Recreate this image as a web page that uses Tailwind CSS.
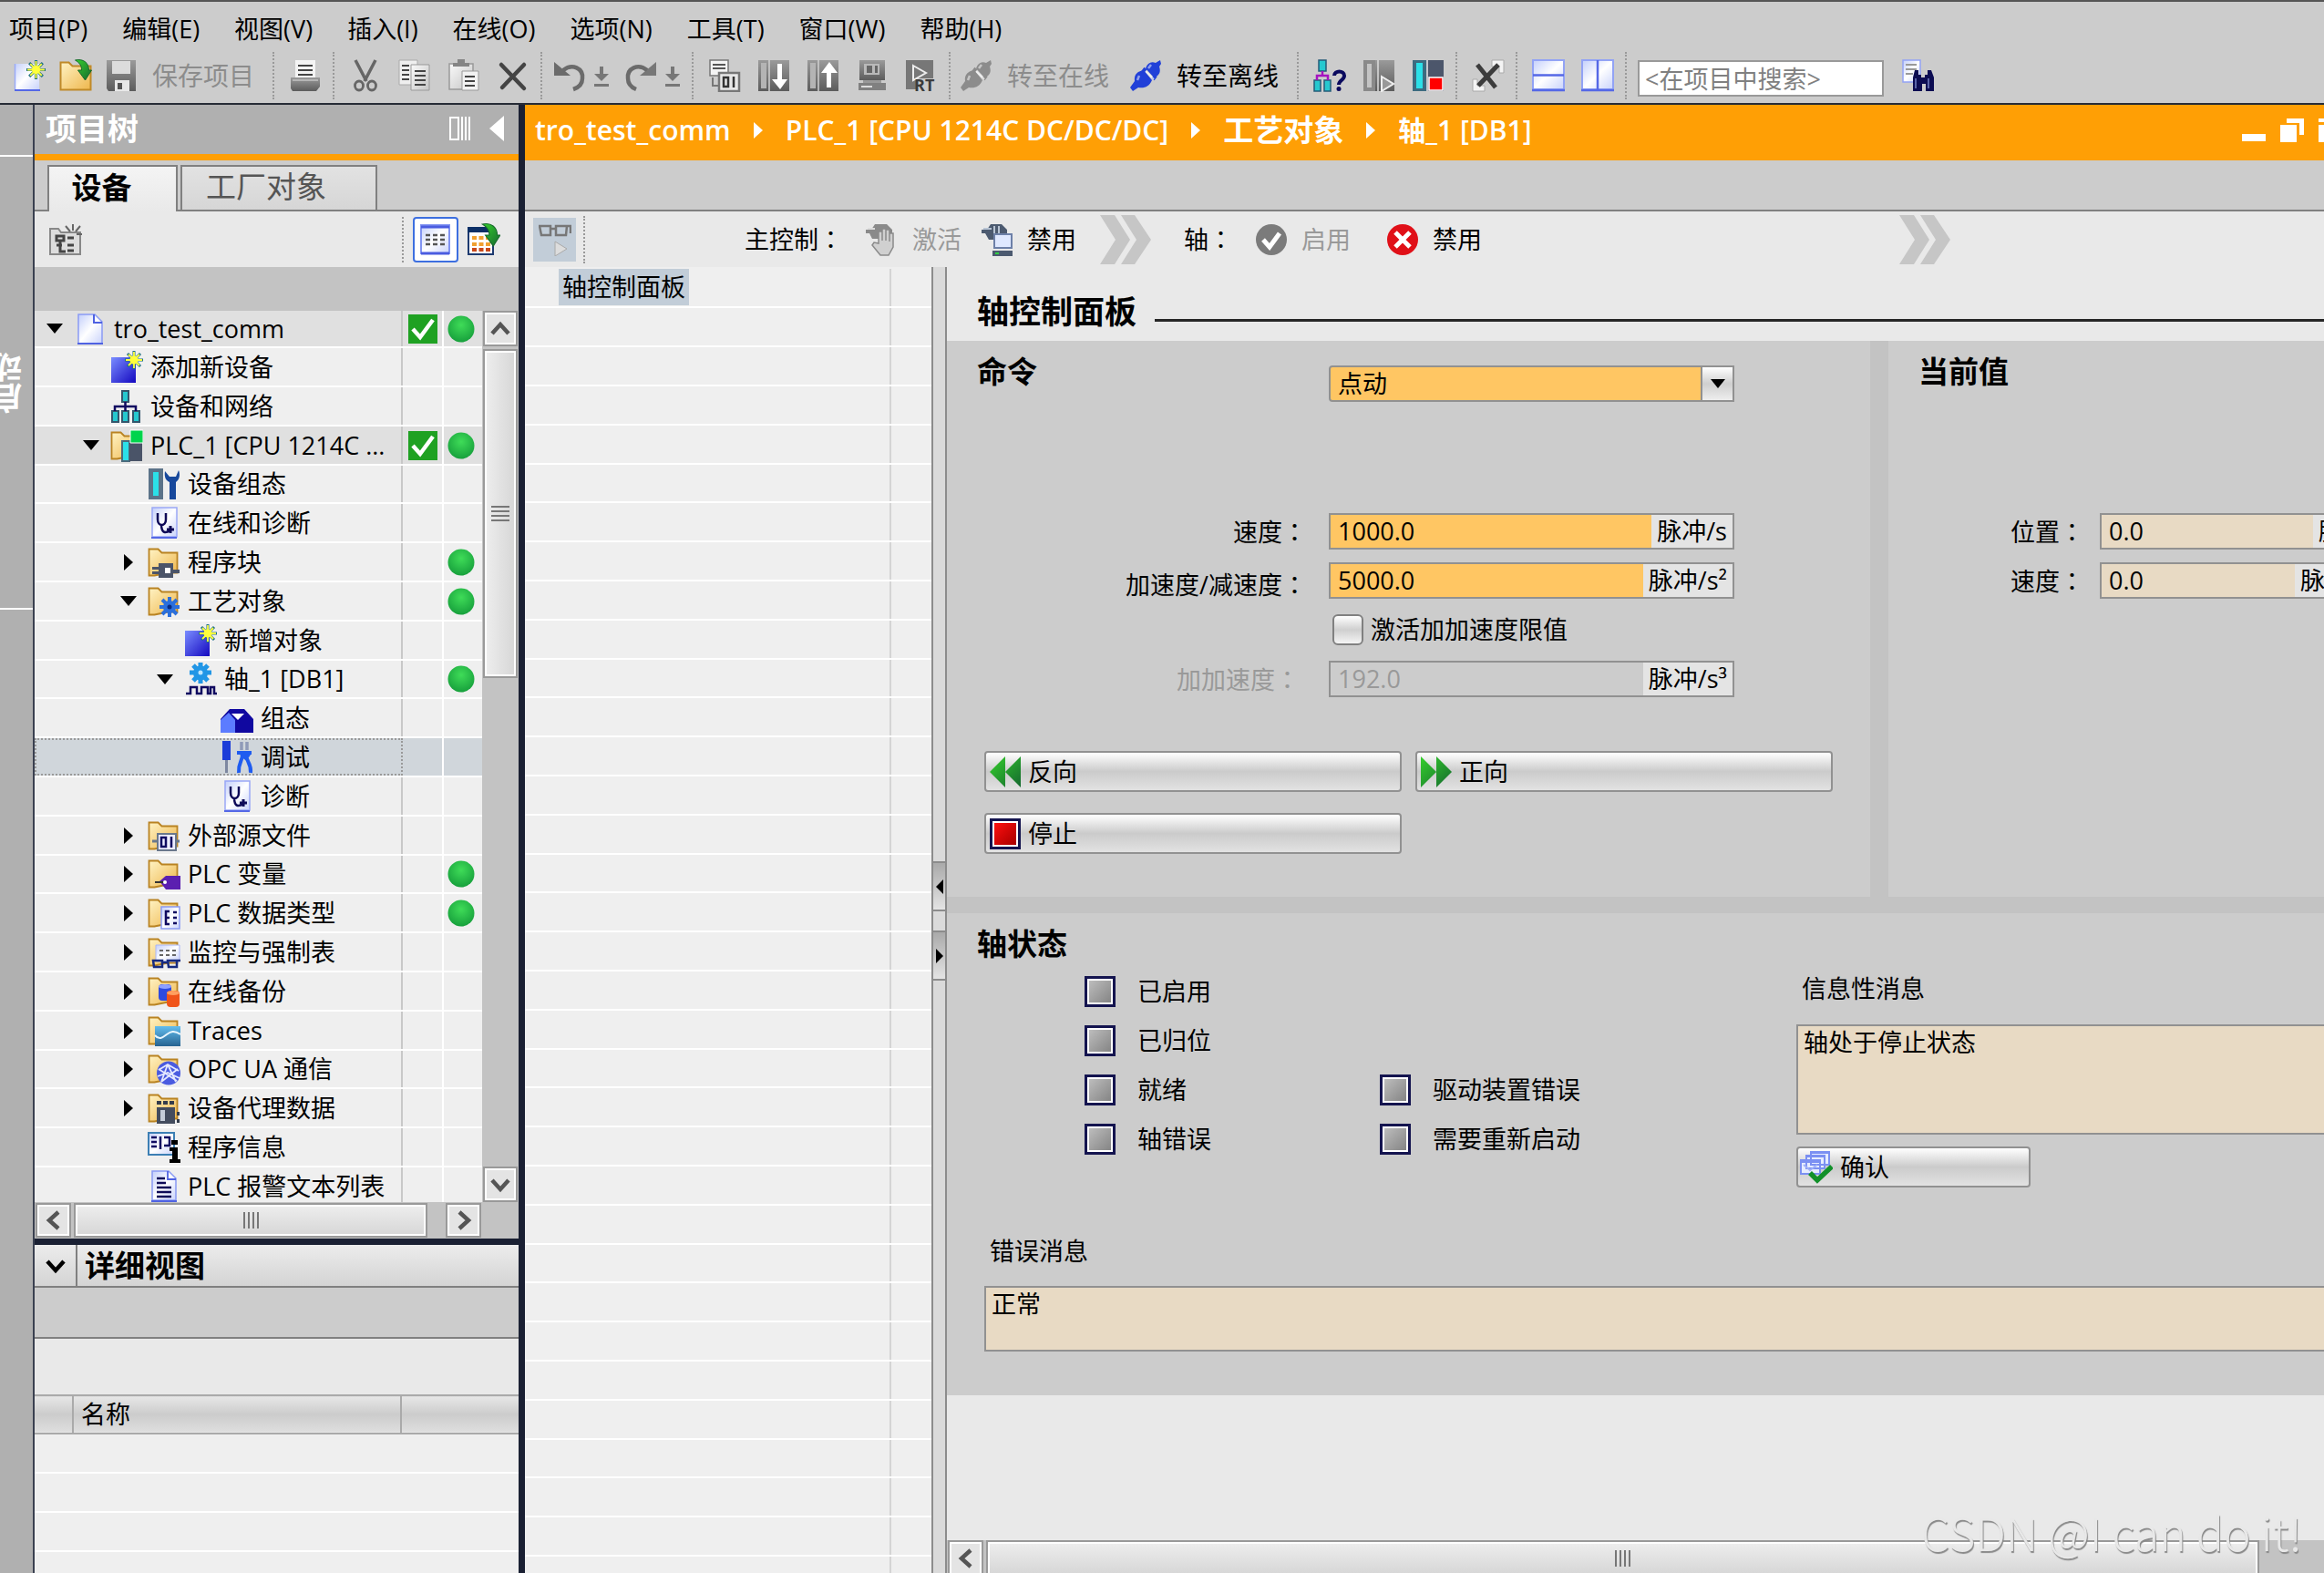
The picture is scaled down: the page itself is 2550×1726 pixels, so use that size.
<!DOCTYPE html>
<html lang="zh-CN">
<head>
<meta charset="utf-8">
<title>tro_test_comm</title>
<script src="https://cdn.jsdelivr.net/npm/@tailwindcss/browser@4"></script>
</head>
<body class="flex h-screen flex-col overflow-hidden bg-[#cccccc] font-['Open_Sans','Noto_Sans_CJK_SC',sans-serif] text-[27px] leading-[36px] text-black">

<!-- Icon library -->
<svg class="absolute size-0" aria-hidden="true">
  <defs>
    <linearGradient id="gFolder" x1="0" y1="0" x2="1" y2="1"><stop offset="0" stop-color="#fff3c4"/><stop offset="1" stop-color="#eeb64c"/></linearGradient>
    <linearGradient id="gDoc" x1="0" y1="0" x2="1" y2="1"><stop offset="0" stop-color="#c3cffb"/><stop offset=".5" stop-color="#fff"/><stop offset="1" stop-color="#c9d3fb"/></linearGradient>
    <linearGradient id="gBlue" x1="0" y1="0" x2="1" y2="1"><stop offset="0" stop-color="#7a8dff"/><stop offset="1" stop-color="#1408c0"/></linearGradient>
    <linearGradient id="gGreen" x1="0" y1="0" x2="1" y2="1"><stop offset="0" stop-color="#35d02c"/><stop offset="1" stop-color="#15682f"/></linearGradient>
    <linearGradient id="gGray" x1="0" y1="0" x2="0" y2="1"><stop offset="0" stop-color="#9a9a9a"/><stop offset="1" stop-color="#5c5c5c"/></linearGradient>
    <linearGradient id="gPaper" x1="0" y1="0" x2="1" y2="1"><stop offset="0" stop-color="#fafafa"/><stop offset="1" stop-color="#c4c4c4"/></linearGradient>
    <linearGradient id="gTrace" x1="0" y1="0" x2="0" y2="1"><stop offset="0" stop-color="#62bdee"/><stop offset="1" stop-color="#276391"/></linearGradient>
    <radialGradient id="gBall" cx=".5" cy=".35" r=".65"><stop offset="0" stop-color="#3fdc58"/><stop offset="1" stop-color="#17a03c"/></radialGradient>
  </defs>

  <symbol id="star" viewBox="0 0 20 20"><path d="M10 0v20M0 10h20M3 3l14 14M17 3L3 17" stroke="#1d6f86" stroke-width="3"/><path d="M10 1v18M1 10h18M4 4l12 12M16 4L4 16" stroke="#ffff3c" stroke-width="1.800"/><circle cx="10" cy="10" r="4.500" fill="#ffff3c"/></symbol>
  <symbol id="folder" viewBox="0 0 36 36"><path d="M1.500 3.500h10l4 4h17v22h-10l-15 3h-6z" fill="url(#gFolder)" stroke="#b98322" stroke-width="1.800"/></symbol>
  <symbol id="swoosh" viewBox="0 0 20 24"><path d="M2 1c9-2 15 3 15 11h3l-7 11-8-11h4C9 7 7 4 2 1z" fill="url(#gGreen)" stroke="#176a2c"/></symbol>

  <symbol id="new" viewBox="0 0 36 36"><path d="M1 5h20v0h7v28H1z" fill="url(#gDoc)"/><path d="M1 34h28" stroke="#5568e6" stroke-width="2"/><path d="M1.500 33V5" stroke="#9aabf8" stroke-width="1.500"/><use href="#star" x="14" y="1" width="21" height="21"/></symbol>
  <symbol id="open" viewBox="0 0 36 36"><path d="M1.500 3.500h9l4 4h20v26h-33z" fill="url(#gFolder)" stroke="#c08a28" stroke-width="2"/><use href="#swoosh" x="15" y="0" width="21" height="24"/></symbol>
  <symbol id="save" viewBox="0 0 36 36"><path d="M2 1h32v34H4l-2-3z" fill="url(#gGray)"/><path d="M8 2h20v14H8z" fill="#dcdcdc"/><path d="M11 23h16v12H11z" fill="#e8e8e8"/><path d="M14 26h5v7h-5z" fill="#555"/></symbol>
  <symbol id="print" viewBox="0 0 36 36"><path d="M7 1h22v20H7z" fill="#f4f4f4"/><path d="M10 7h16M10 12h16M10 17h16" stroke="#444" stroke-width="2"/><path d="M2 20h32v10l-4 5H4l-2-3z" fill="url(#gGray)"/><path d="M4 23h28" stroke="#b5b5b5" stroke-width="2"/></symbol>
  <symbol id="cut" viewBox="0 0 36 36"><path d="M7 1l12 23M29 1L17 24" stroke="#666" stroke-width="3.500" fill="none"/><ellipse cx="11" cy="29" rx="4.500" ry="5" fill="none" stroke="#666" stroke-width="2.800"/><ellipse cx="25" cy="29" rx="4.500" ry="5" fill="none" stroke="#666" stroke-width="2.800"/></symbol>
  <symbol id="copy" viewBox="0 0 36 36"><path d="M1 1h20v27H1z" fill="#efefef" stroke="#aaa"/><path d="M4 7h8M4 12h8M4 17h8M4 22h8" stroke="#444" stroke-width="2"/><path d="M14 6h20v28H14z" fill="url(#gPaper)" stroke="#999"/><path d="M18 13h12M18 18h12M18 23h12M18 28h12" stroke="#444" stroke-width="2"/></symbol>
  <symbol id="paste" viewBox="0 0 36 36"><path d="M2 5h26v28H2z" fill="url(#gPaper)" stroke="#999" stroke-width="1.500"/><path d="M6 8h18V4h-5V0h-8v4H6z" fill="#858585"/><path d="M16 13h18v21H16z" fill="#f2f2f2" stroke="#999"/><path d="M19 19h11M19 24h11M19 29h11" stroke="#444" stroke-width="2"/></symbol>
  <symbol id="cross" viewBox="0 0 36 36"><path d="M5 6l25 26M30 6L6 31" stroke="#444" stroke-width="4.500" stroke-linecap="round"/></symbol>
  <symbol id="undo" viewBox="0 0 36 36"><path d="M1 3l18 15H1z" fill="#6b6b6b"/><path d="M11 12c10-8 22-2 21 9 0 6-4 10-10 12" fill="none" stroke="#6b6b6b" stroke-width="4.500"/></symbol>
  <symbol id="redo" viewBox="0 0 36 36"><path d="M35 3L17 18h18z" fill="#777"/><path d="M25 12C15 4 3 10 4 21c0 6 4 10 9 12" fill="none" stroke="#6b6b6b" stroke-width="4.500"/></symbol>
  <symbol id="step" viewBox="0 0 18 36"><path d="M7 8h4v8h6l-8 8-8-8h6zM1 27h16v3H1z" fill="#777"/></symbol>
  <symbol id="compile" viewBox="0 0 36 36"><path d="M2 1h20v17H2z" fill="#f4f4f4" stroke="#777" stroke-width="1.500"/><path d="M5 6h14M5 10h14" stroke="#555" stroke-width="2"/><path d="M12 15h22v20H12z" fill="#e8e8e8" stroke="#777" stroke-width="2.500"/><path d="M17 20h5v10h-5zM28 19v12" fill="none" stroke="#333" stroke-width="2.500"/><path d="M5 20v9h6" fill="none" stroke="#777" stroke-width="2"/></symbol>
  <symbol id="download" viewBox="0 0 36 36"><path d="M1 1h34v34H1z" fill="url(#gGray)"/><path d="M4 4h6v28H4z" fill="#b4b4b4"/><path d="M13 1v34" stroke="#d0d0d0" stroke-width="1.500"/><path d="M22 5h5v17h6l-8 11-9-11h6z" fill="#fff"/></symbol>
  <symbol id="upload" viewBox="0 0 36 36"><path d="M1 1h34v34H1z" fill="url(#gGray)"/><path d="M4 4h6v28H4z" fill="#b4b4b4"/><path d="M13 1v34" stroke="#d0d0d0" stroke-width="1.500"/><path d="M22 31h5V15h7L25 3l-9 12h6z" fill="#fff"/></symbol>
  <symbol id="pc" viewBox="0 0 36 36"><path d="M4 1h28v22H4z" fill="url(#gGray)"/><path d="M9 5h17v12H9z" fill="#b9b9b9"/><path d="M12 7h6v8h-6zM21 7h3v8h-3z" fill="#666"/><path d="M8 23h20v3H8z" fill="#999"/><path d="M3 26h30v8H3z" fill="#808080"/><path d="M6 30h12" stroke="#ddd" stroke-width="2"/></symbol>
  <symbol id="rt" viewBox="0 0 36 36"><path d="M1 1h30v20H12v12H1z" fill="#777"/><path d="M9 7l14 8-14 8z" fill="none" stroke="#eee" stroke-width="2"/></symbol>
  <symbol id="plug" viewBox="0 0 36 36"><path d="M34 1l-5 3c-5-2-9 0-11 6l9 10c6-2 8-6 6-12l2-3zM16 12c-7 1-11 5-10 12l-5 7 3 4 6-4c7 1 12-1 15-8z" fill="currentColor"/><path d="M15 14l3-4M26 22l3-4" stroke="currentColor" stroke-width="4"/><path d="M18 13l9 9" stroke="#fff" stroke-opacity=".7" stroke-width="2"/><path d="M24 6l-3 4M11 18l-2 5" stroke="#fff" stroke-opacity=".5" stroke-width="2.500"/></symbol>
  <symbol id="access" viewBox="0 0 36 36"><path d="M6 1h8v12H6zM1 23h7v12H1zM12 23h7v12h-7z" fill="#25c8cf" stroke="#245b78" stroke-width="1.500"/><path d="M10 13v5M4 23v-5h12v5" fill="none" stroke="#a514c0" stroke-width="2.500"/><path d="M23 18c0-6 11-6 11 0 0 5-6 5-6 10" fill="none" stroke="#0a0a5e" stroke-width="4"/><circle cx="28" cy="32.500" r="2.500" fill="#0a0a5e"/></symbol>
  <symbol id="start" viewBox="0 0 36 36"><path d="M1 1h34v34H1z" fill="url(#gGray)"/><path d="M1 1h13v34H1z" fill="#8a8a8a"/><path d="M5 5h5v26H5z" fill="#c4c4c4"/><path d="M17 1v34" stroke="#ddd" stroke-width="1.500"/><path d="M21 19l13 8-13 8z" fill="#999" stroke="#eee" stroke-width="2"/></symbol>
  <symbol id="stop" viewBox="0 0 36 36"><path d="M1 1h34v34H1z" fill="#4c566b"/><path d="M1 1h15v34H1z" fill="#3c6b80"/><path d="M5 4h7v28H5z" fill="#2be0e8"/><path d="M17 1v34" stroke="#eee" stroke-width="1.500"/><path d="M19 20h15v14H19z" fill="#f00" stroke="#fff" stroke-width="1.500"/></symbol>
  <symbol id="xref" viewBox="0 0 36 36"><path d="M22 1h13v14h-5V8h-8zM1 22h5v7h8v6H1z" fill="#f4f4f4" stroke="#aaa"/><path d="M6 6l20 25M29 6L7 29" stroke="#3c3c3c" stroke-width="5"/></symbol>
  <symbol id="splitH" viewBox="0 0 36 36"><path d="M1 1h34v32H1z" fill="url(#gDoc)" stroke="#92a3f5" stroke-width="2"/><path d="M1 17.500h34M0 34h36" stroke="#5568e6" stroke-width="2.500"/></symbol>
  <symbol id="splitV" viewBox="0 0 36 36"><path d="M1 1h34v32H1z" fill="url(#gDoc)" stroke="#92a3f5" stroke-width="2"/><path d="M18 1v33M0 34h36" stroke="#5568e6" stroke-width="2.500"/></symbol>
  <symbol id="find" viewBox="0 0 36 36"><path d="M1 1h19v24H1z" fill="url(#gDoc)" stroke="#92a3f5" stroke-width="1.500"/><path d="M4 6h12M4 11h12M4 16h8" stroke="#999" stroke-width="2"/><path d="M14 12h4v5h3v3h4v-3h3v-5h4l3 8v15H26v-8h-4v8H12V20z" fill="#0c0c52"/><path d="M15 21v11M29 21v11" stroke="#5a64a8" stroke-width="2"/></symbol>

  <symbol id="newDevGray" viewBox="0 0 36 36"><path d="M1 6h9l3 4h21v24H1z" fill="#ddd" stroke="#888" stroke-width="2"/><path d="M8 14h8v5H8zM20 16h7M12 19v12h6M20 24h7M20 30h7M8 24h6" fill="none" stroke="#444" stroke-width="3"/><path d="M26 1v7M18 3l5 6M34 3l-5 6M30 12h6" stroke="#666" stroke-width="2"/></symbol>
  <symbol id="list" viewBox="0 0 36 36"><path d="M2 2h31v31H2z" fill="url(#gDoc)" stroke="#8294f2" stroke-width="2"/><path d="M2 4h31M2 33h31" stroke="#4a5ce0" stroke-width="3"/><path d="M7 13h22M7 18h22M7 23h22" stroke="#555" stroke-width="2.500" stroke-dasharray="5 3"/></symbol>
  <symbol id="gridGo" viewBox="0 0 36 36"><path d="M1 5h27v29H1z" fill="#fff" stroke="#1e3a70" stroke-width="2"/><path d="M0 4h29v6H0z" fill="#0c2f66"/><path d="M5 16h20M5 23h20" stroke="#f0a030" stroke-width="4" stroke-dasharray="5 2.500"/><path d="M5 29h20" stroke="#c8481a" stroke-width="4" stroke-dasharray="5 2.500"/><use href="#swoosh" x="14" y="0" width="22" height="26"/></symbol>
  <symbol id="glasses" viewBox="0 0 36 36"><path d="M1 3h12v10H3zM19 3h12l-1 10H19zM13 6h6M31 3h4v8" fill="none" stroke="#777" stroke-width="2.500"/><path d="M18 20l13 8-13 8z" fill="#ddd" stroke="#aaa"/></symbol>

  <symbol id="doc" viewBox="0 0 36 36"><path d="M5 2h18l8 8v24H5z" fill="url(#gDoc)" stroke="#8a9bf4" stroke-width="1.500"/><path d="M22 2v9h9M4 34h28" fill="none" stroke="#4f62e2" stroke-width="2"/></symbol>
  <symbol id="add" viewBox="0 0 36 36"><path d="M1 7h27v28H1z" fill="url(#gBlue)"/><use href="#star" x="16" y="0" width="20" height="20"/></symbol>
  <symbol id="net" viewBox="0 0 36 36"><path d="M13 1h7v12h-7zM2 23h7v12H2zM13 23h7v12h-7zM25 23h7v12h-7z" fill="#25c8cf" stroke="#34566c" stroke-width="2"/><path d="M16.500 13v10M5 23v-5h23v5" fill="none" stroke="#100a60" stroke-width="2.500"/></symbol>
  <symbol id="plc" viewBox="0 0 36 36"><use href="#folder" width="36" height="36"/><path d="M13 13h8v22h-8z" fill="#2be0e8" stroke="#4a6a7c" stroke-width="2"/><path d="M21 15h14v20H21z" fill="#4a5468"/><path d="M22 1h14v14H22z" fill="#00d44c" stroke="#fff"/></symbol>
  <symbol id="devcfg" viewBox="0 0 36 36"><path d="M1 1h16v34H1z" fill="#5b7389"/><path d="M6 5h6v26H6z" fill="#2be0e8"/><path d="M19 4c-1 7 1 10 5 12v19h7V16c4-3 5-8 3-13l-3 7h-7z" fill="#17489c"/></symbol>
  <symbol id="diag" viewBox="0 0 36 36"><path d="M5 1h27v32H5z" fill="url(#gDoc)" stroke="#9aa8f6" stroke-width="1.500"/><path d="M4 34h28" stroke="#5568e6" stroke-width="2"/><path d="M11 7v7c0 8 9 8 9 0V7M15 19c0 11 5 10 10 7" fill="none" stroke="#0e0a58" stroke-width="2.500"/><path d="M21 25h8M25 21v8" stroke="#0e0a58" stroke-width="3"/></symbol>
  <symbol id="fBlock" viewBox="0 0 36 36"><use href="#folder" width="36" height="36"/><path d="M5 23h7v-4h16v7h7v4h-7v5H12v-4H5v-3h7v-2H5z" fill="#4b5468"/><path d="M19 24h6v6h-6z" fill="#fff"/></symbol>
  <symbol id="fGear" viewBox="0 0 36 36"><use href="#folder" width="36" height="36"/><path d="M24 13v22M13 24h22M16 16l16 16M32 16L16 32" stroke="#2b6fdc" stroke-width="4"/><circle cx="24" cy="24" r="7" fill="#2b6fdc"/><circle cx="24" cy="24" r="2.500" fill="#082a80"/></symbol>
  <symbol id="axis" viewBox="0 0 36 36"><path d="M18 0v23M6 11h24M10 3l16 17M26 3L10 20" stroke="#2196e6" stroke-width="5"/><circle cx="18" cy="11.500" r="8" fill="#2196e6"/><circle cx="18" cy="11" r="2.500" fill="#bfe6ff"/><path d="M2 34h5v-7h7v7h5v-7h7v7h3v-7h4v7h3" fill="none" stroke="#100a60" stroke-width="2.500"/></symbol>
  <symbol id="box" viewBox="0 0 36 36"><path d="M0 19L10 8h16l10 11v15H0z" fill="#1008a0"/><path d="M0 20l9-8 7 8v14H0z" fill="#5c7cff"/><path d="M12 13h14l-7 7z" fill="#fff"/></symbol>
  <symbol id="tools" viewBox="0 0 36 36"><path d="M2 0h9v21H2z" fill="#1b3cd8"/><path d="M6.500 21v14" stroke="#7d88a0" stroke-width="3"/><path d="M23 1v9M29 1v9" stroke="#8f9ab8" stroke-width="3.500"/><path d="M18 13h16M22 13l6 6 4-6M24 15c0 8-5 9-4 20M28 15c0 8 6 9 5 20" fill="none" stroke="#1f5cf0" stroke-width="4"/></symbol>
  <symbol id="fSource" viewBox="0 0 36 36"><use href="#folder" width="36" height="36"/><path d="M5 24h30" stroke="#6a788c" stroke-width="3"/><path d="M11 16h20v18H11z" fill="#eef" stroke="#6a788c" stroke-width="2"/><path d="M15 20h5v10h-5zM26 19v12" fill="none" stroke="#100a60" stroke-width="2.500"/></symbol>
  <symbol id="fTag" viewBox="0 0 36 36"><use href="#folder" width="36" height="36"/><path d="M13 26l7-6h16v15H20z" fill="#5b1fb0"/><path d="M8 27h10" stroke="#333" stroke-width="2"/><circle cx="19" cy="27" r="2" fill="#fff"/></symbol>
  <symbol id="fType" viewBox="0 0 36 36"><use href="#folder" width="36" height="36"/><path d="M15 11h20v24H15z" fill="url(#gDoc)" stroke="#8a9bf4" stroke-width="1.500"/><path d="M24 16h-4v14h4M20 23h4M28 17h4M28 23h4M28 29h4" fill="none" stroke="#100a60" stroke-width="2.500"/></symbol>
  <symbol id="fWatch" viewBox="0 0 36 36"><use href="#folder" width="36" height="36"/><path d="M9 10h26v18H9z" fill="url(#gDoc)" stroke="#a9b6f8"/><path d="M13 16h19M13 21h19" stroke="#666" stroke-width="2" stroke-dasharray="4 3"/><path d="M6 27h10v7H7zM22 27h10v7H23zM16 29h6M32 27h4" fill="none" stroke="#162a80" stroke-width="2.500"/></symbol>
  <symbol id="fBackup" viewBox="0 0 36 36"><use href="#folder" width="36" height="36"/><rect x="12" y="10" width="14" height="18" rx="4" fill="#2e4ae0"/><ellipse cx="19" cy="12.500" rx="7" ry="2.500" fill="#8ea0ff"/><rect x="21" y="17" width="14" height="18" rx="4" fill="#f0541a"/><ellipse cx="28" cy="19.500" rx="7" ry="2.500" fill="#ffa060"/></symbol>
  <symbol id="fTrace" viewBox="0 0 36 36"><use href="#folder" width="36" height="36"/><path d="M8 13h28v22H8z" fill="url(#gTrace)"/><path d="M8 23c5 6 9 2 13-1s8-5 15 0" fill="none" stroke="#e8f6ff" stroke-width="2"/></symbol>
  <symbol id="fOpc" viewBox="0 0 36 36"><use href="#folder" width="36" height="36"/><circle cx="23" cy="22.500" r="13" fill="#4a5be0"/><path d="M12 19l10-6 12 7M22 13l-7 19M22 13l9 19M11 26l11-4 13 6M15 32L33 18M12 18l20 13" fill="none" stroke="#e4e8ff" stroke-width="1.800"/></symbol>
  <symbol id="fProxy" viewBox="0 0 36 36"><use href="#folder" width="36" height="36"/><path d="M10 12h5M17 12h5M24 12h5" stroke="#333c4c" stroke-width="4"/><path d="M10 17h20v18H10z" fill="#434c5e"/><path d="M14 20h5v12h-5z" fill="#c4ccd8"/><path d="M32 24h3M32 32h3" stroke="#333c4c" stroke-width="4"/></symbol>
  <symbol id="info" viewBox="0 0 36 36"><path d="M1 2h28v24H1z" fill="url(#gDoc)" stroke="#3c7fb4" stroke-width="2"/><path d="M4 7h6M4 12h6M4 17h6M14 6v14M18 7h6v9h-6" fill="none" stroke="#100a60" stroke-width="2.500"/><path d="M26 10h7v5h-7zM24 18h9v13h3v4H24v-4h3v-9h-3z" fill="#000"/></symbol>
  <symbol id="textlist" viewBox="0 0 36 36"><path d="M5 1h18l8 8v24H5z" fill="url(#gDoc)" stroke="#8a9bf4" stroke-width="1.500"/><path d="M22 1v9h9M4 34h28" fill="none" stroke="#4f62e2" stroke-width="1.800"/><path d="M10 9h9M10 14h10M10 19h16M10 24h16M10 29h16" stroke="#0e0a58" stroke-width="2.500"/></symbol>

  <symbol id="handOff" viewBox="0 0 36 36"><path d="M1 7h6l4-6h13l6 6v10H8L5 11H1z" fill="#8a8a8a"/><path d="M3 6h8" stroke="#ddd" stroke-width="2"/><path d="M15 22V9h4v10V6h4v13V7h4v13V11h4v15l-5 9h-9L8 24l2-3z" fill="#d0d0d0" stroke="#8a8a8a" stroke-width="1.500"/></symbol>
  <symbol id="motorPc" viewBox="0 0 36 36"><path d="M1 7h6l4-6h12l6 6v11H9L5 11H1z" fill="#4c5a70"/><path d="M3 6h9M15 3v13M20 3v13" stroke="#b8c4d4" stroke-width="2"/><path d="M15 12h19v15H15z" fill="#dfe8ff" stroke="#6d80a8" stroke-width="2"/><path d="M13 30h22v6H13z" fill="#4c5a70"/><path d="M16 33h4" stroke="#2fd040" stroke-width="2"/></symbol>
  <symbol id="okOff" viewBox="0 0 36 36"><circle cx="18" cy="18" r="17" fill="#7b7b7b"/><path d="M9 18l7 8 11-15" fill="none" stroke="#fff" stroke-width="5"/></symbol>
  <symbol id="errOn" viewBox="0 0 36 36"><circle cx="18" cy="18" r="17" fill="#e01018"/><path d="M10 10l16 16M26 10L10 26" stroke="#fff" stroke-width="5"/></symbol>
  <symbol id="chevrons" viewBox="0 0 56 54"><path d="M0 0h16l17 27-17 27H0l17-27zM23 0h15l18 27-18 27H23l17-27z" fill="#c6c6c6"/></symbol>
  <symbol id="ok" viewBox="0 0 32 32"><path d="M0 0h32v32H0z" fill="#1fa122"/><path d="M5 16l8 9L27 6" fill="none" stroke="#fff" stroke-width="4.500"/></symbol>
  <symbol id="rew" viewBox="0 0 34 34"><path d="M17 0v34L0 17zM34 0v34L17 17z" fill="url(#gGreen)"/></symbol>
  <symbol id="fwd" viewBox="0 0 34 34"><path d="M0 0l17 17L0 34zM17 0l17 17-17 17z" fill="url(#gGreen)"/></symbol>
  <symbol id="ack" viewBox="0 0 36 36"><path d="M12 1h20v14H12zM7 5h20v14H7zM1 10h21v15H1z" fill="#e6ecff" stroke="#7b90f2" stroke-width="2"/><path d="M1 10h21v3H1zM7 4h20v3H7zM12 0h20v3H12z" fill="#7b90f2"/><path d="M4 15l7 6 8-6" fill="none" stroke="#9fb0f8" stroke-width="2"/><path d="M11 24l8 8L35 17" fill="none" stroke="#12902a" stroke-width="5.500"/></symbol>
  <symbol id="chev" viewBox="0 0 24 24"><path d="M3 7l9 10 9-10" fill="none" stroke="currentColor" stroke-width="4.500"/></symbol>
</svg>

<!-- Menu bar and toolbar -->
<header class="shrink-0 border-t-2 border-b-2 border-t-[#555] border-b-[#262b36] pb-1">
  <nav class="flex h-[55px] items-center gap-[38px] pt-1 pl-2.5" aria-label="菜单">
    <a href="#">项目(P)</a><a href="#">编辑(E)</a><a href="#">视图(V)</a><a href="#">插入(I)</a><a href="#">在线(O)</a><a href="#">选项(N)</a><a href="#">工具(T)</a><a href="#">窗口(W)</a><a href="#">帮助(H)</a>
  </nav>
  <div class="flex h-[52px] text-[28px]" role="toolbar" aria-label="工具栏">
    <div class="flex items-center gap-3.5 pr-5 pl-[15px]">
      <button aria-label="新建"><svg class="size-9"><use href="#new"/></svg></button>
      <button aria-label="打开"><svg class="size-9"><use href="#open"/></svg></button>
      <button class="flex items-center gap-4 text-[#8c8c8c]"><svg class="size-9"><use href="#save"/></svg>保存项目</button>
    </div>
    <div class="flex items-center border-l-2 border-dotted border-[#999] pr-3 pl-4">
      <button aria-label="打印"><svg class="size-9"><use href="#print"/></svg></button>
    </div>
    <div class="flex items-center gap-[18px] border-l-2 border-dotted border-[#999] pr-3 pl-4">
      <button aria-label="剪切"><svg class="size-9"><use href="#cut"/></svg></button>
      <button aria-label="复制"><svg class="size-9"><use href="#copy"/></svg></button>
      <button aria-label="粘贴"><svg class="size-9"><use href="#paste"/></svg></button>
      <button aria-label="删除"><svg class="size-9"><use href="#cross"/></svg></button>
    </div>
    <div class="flex items-center gap-4 border-l-2 border-dotted border-[#999] px-3">
      <button class="flex gap-2" aria-label="撤销"><svg class="size-9"><use href="#undo"/></svg><svg class="h-9 w-[18px]"><use href="#step"/></svg></button>
      <button class="flex gap-2" aria-label="重做"><svg class="size-9"><use href="#redo"/></svg><svg class="h-9 w-[18px]"><use href="#step"/></svg></button>
    </div>
    <div class="flex items-center gap-[18px] border-l-2 border-dotted border-[#999] pr-3 pl-4">
      <button aria-label="编译"><svg class="size-9"><use href="#compile"/></svg></button>
      <button aria-label="下载到设备"><svg class="size-9"><use href="#download"/></svg></button>
      <button aria-label="从设备上传"><svg class="size-9"><use href="#upload"/></svg></button>
      <button aria-label="启动仿真"><svg class="size-9"><use href="#pc"/></svg></button>
      <button aria-label="运行系统"><svg class="size-9" viewBox="0 0 36 36"><use href="#rt" width="36" height="36"/><text x="10" y="35" font-size="18" font-weight="700" fill="#3c3c3c">RT</text></svg></button>
    </div>
    <div class="flex items-center gap-[22px] border-l-2 border-dotted border-[#999] pr-5 pl-2.5">
      <button class="flex items-center gap-4 text-[#8c8c8c]"><svg class="size-9"><use href="#plug"/></svg>转至在线</button>
      <button class="flex items-center gap-4"><svg class="size-9 text-[#2140d8]"><use href="#plug"/></svg>转至离线</button>
    </div>
    <div class="flex items-center gap-[18px] border-l-2 border-dotted border-[#999] pr-3 pl-4">
      <button aria-label="可访问的设备"><svg class="size-9"><use href="#access"/></svg></button>
      <button aria-label="启动 CPU"><svg class="size-9"><use href="#start"/></svg></button>
      <button aria-label="停止 CPU"><svg class="size-9"><use href="#stop"/></svg></button>
    </div>
    <div class="flex items-center border-l-2 border-dotted border-[#999] pr-3 pl-4">
      <button aria-label="交叉引用"><svg class="size-9"><use href="#xref"/></svg></button>
    </div>
    <div class="flex items-center gap-[18px] border-l-2 border-dotted border-[#999] pr-3 pl-4">
      <button aria-label="水平拆分"><svg class="size-9"><use href="#splitH"/></svg></button>
      <button aria-label="垂直拆分"><svg class="size-9"><use href="#splitV"/></svg></button>
    </div>
    <div class="flex items-center gap-5 border-l-2 border-dotted border-[#999] pl-3">
      <input type="text" aria-label="在项目中搜索" placeholder="&lt;在项目中搜索&gt;" class="mt-1.5 h-10 w-[270px] border-2 border-[#999] bg-white px-1.5 text-[27px] placeholder:text-[#808080]">
      <button aria-label="搜索"><svg class="size-9"><use href="#find"/></svg></button>
    </div>
  </div>
</header>

<div class="flex min-h-0 flex-1">
  <!-- Portal rail -->
  <div class="flex w-[38px] shrink-0 flex-col overflow-hidden border-r-2 border-[#3a4050] bg-[#b0b0b0]">
    <div class="h-[55px] shrink-0"></div>
    <button class="flex h-[499px] items-center border-y-2 border-white font-bold text-white">
      <span class="-ml-2 rotate-180 text-[34px] leading-[34px] [writing-mode:vertical-rl]">启动</span>
    </button>
  </div>

  <!-- Project tree -->
  <aside class="flex w-[531px] shrink-0 flex-col">
    <div class="flex h-[54px] shrink-0 items-center bg-[#b0b0b0] pr-4 pb-0.5 pl-3 text-white">
      <h1 class="text-[34px] font-bold">项目树</h1>
      <svg class="mr-5 ml-auto h-[26px] w-6" viewBox="0 0 24 26"><path d="M1 1h9v24H1zM14 0v26M18 0v26M22 0v26" fill="none" stroke="#fff" stroke-width="2"/></svg>
      <svg class="h-7 w-4" viewBox="0 0 16 28"><path d="M16 0v28L0 14z" fill="#fff"/></svg>
    </div>
    <div class="h-[7px] shrink-0 bg-[#ff9f05]"></div>
    <div class="flex h-14 shrink-0 items-end gap-[3px] border-b-2 border-[#808080] pl-3.5 text-[33px]" role="tablist">
      <button role="tab" aria-selected="true" class="-mb-0.5 h-[51px] w-[143px] border-2 border-b-0 border-[#808080] bg-linear-to-b from-[#f4f4f4] to-[#e9e9e9] pr-6 pb-1 font-bold">设备</button>
      <button role="tab" aria-selected="false" class="h-[49px] w-[216px] border-2 border-b-0 border-[#808080] bg-linear-to-b from-[#e2e2e2] to-[#d6d6d6] pr-7 pb-1 text-[#555]">工厂对象</button>
    </div>
    <div class="flex h-[61px] shrink-0 items-center bg-[#e9e9e9] pr-5 pl-4">
      <button aria-label="新建组"><svg class="size-9"><use href="#newDevGray"/></svg></button>
      <div class="ml-auto flex items-center gap-2.5 border-l-2 border-dotted border-[#999] pl-2.5">
        <button aria-label="详细列表" class="flex h-[50px] w-[50px] items-center justify-center rounded border-2 border-[#3d6fe0] bg-white"><svg class="size-9"><use href="#list"/></svg></button>
        <button aria-label="转到"><svg class="size-9"><use href="#gridGo"/></svg></button>
      </div>
    </div>
    <div class="h-12 shrink-0 bg-[#c3c3c3]"></div>
    <div class="flex h-[978px] shrink-0 bg-[#c3c3c3]">
      <ul id="tree" role="tree" class="w-[491px] overflow-hidden bg-[#efefef]"></ul>
      <div class="flex flex-1 flex-col items-center">
        <button aria-label="向上滚动" class="flex h-[39px] w-[38px] items-center justify-center border-2 border-[#999] bg-[#e4e4e4] inset-ring-2 inset-ring-white"><svg class="size-6 rotate-180 text-[#555]"><use href="#chev"/></svg></button>
        <div class="mt-[3px] flex h-[361px] w-[38px] flex-col items-center justify-center gap-[3px] border-2 border-[#999] bg-linear-to-r from-[#eee] to-[#d6d6d6] inset-ring-2 inset-ring-white"><i class="h-0.5 w-5 bg-[#777]"></i><i class="h-0.5 w-5 bg-[#777]"></i><i class="h-0.5 w-5 bg-[#777]"></i><i class="h-0.5 w-5 bg-[#777]"></i></div>
        <button aria-label="向下滚动" class="mt-auto flex h-[39px] w-[38px] items-center justify-center border-2 border-[#999] bg-[#e4e4e4] inset-ring-2 inset-ring-white"><svg class="size-6 text-[#555]"><use href="#chev"/></svg></button>
      </div>
    </div>
    <div class="flex h-10 shrink-0 items-center bg-[#c3c3c3] pl-px">
      <button aria-label="向左滚动" class="flex h-[38px] w-[39px] items-center justify-center border-2 border-[#999] bg-[#e4e4e4] inset-ring-2 inset-ring-white"><svg class="size-6 rotate-90 text-[#555]"><use href="#chev"/></svg></button>
      <div class="mr-5 ml-[3px] flex h-[38px] w-[388px] items-center justify-center gap-[3px] border-2 border-[#999] bg-linear-to-b from-[#eee] to-[#d6d6d6] inset-ring-2 inset-ring-white"><i class="h-[18px] w-0.5 bg-[#777]"></i><i class="h-[18px] w-0.5 bg-[#777]"></i><i class="h-[18px] w-0.5 bg-[#777]"></i><i class="h-[18px] w-0.5 bg-[#777]"></i></div>
      <button aria-label="向右滚动" class="flex h-[38px] w-[39px] items-center justify-center border-2 border-[#999] bg-[#e4e4e4] inset-ring-2 inset-ring-white"><svg class="size-6 -rotate-90 text-[#555]"><use href="#chev"/></svg></button>
    </div>
    <div class="h-[7px] shrink-0 bg-[#1a2033]"></div>

    <!-- Details view -->
    <div class="flex h-[47px] shrink-0 items-center border-b-2 border-[#808080] bg-linear-to-b from-[#ececec] to-[#d4d4d4]">
      <button aria-label="折叠详细视图" class="flex h-full w-[47px] items-center justify-center border-r-2 border-[#808080]"><svg class="size-6"><use href="#chev"/></svg></button>
      <h2 class="pl-2 text-[33px] font-bold">详细视图</h2>
    </div>
    <div class="h-[56px] shrink-0 border-b-2 border-[#808080]"></div>
    <div class="h-[61px] shrink-0 bg-[#e9e9e9]"></div>
    <div class="min-h-0 flex-1 overflow-hidden bg-[#efefef]">
      <table class="w-full table-fixed border-collapse">
        <thead><tr class="h-[42px] border-y-2 border-[#aaa] bg-linear-to-b from-[#e6e6e6] via-[#cccccc] to-[#dedede] text-left">
          <th class="w-[42px]"></th><th class="w-[360px] border-x-2 border-[#aaa] pl-2 font-normal">名称</th><th></th>
        </tr></thead>
        <tbody>
          <tr class="h-[43px] border-b-2 border-white"><td colspan="3"></td></tr>
          <tr class="h-[43px] border-b-2 border-white"><td colspan="3"></td></tr>
          <tr class="h-[43px] border-b-2 border-white"><td colspan="3"></td></tr>
          <tr class="h-[43px] border-b-2 border-white"><td colspan="3"></td></tr>
        </tbody>
      </table>
    </div>
  </aside>

  <div class="w-[7px] shrink-0 bg-[#1a2033]"></div>

  <!-- Work area -->
  <main class="flex min-w-0 flex-1 flex-col">
    <div class="flex h-[61px] shrink-0 items-center overflow-hidden bg-[#ff9f05] pb-1.5 pl-[11px] text-white">
      <nav class="flex items-center gap-[25px] text-[30px] font-semibold whitespace-nowrap" aria-label="路径">
        <a href="#">tro_test_comm</a><svg class="h-[18px] w-2.5" viewBox="0 0 10 18"><path d="M0 0l10 9-10 9z" fill="#fff"/></svg>
        <a href="#">PLC_1 [CPU 1214C DC/DC/DC]</a><svg class="h-[18px] w-2.5" viewBox="0 0 10 18"><path d="M0 0l10 9-10 9z" fill="#fff"/></svg>
        <a href="#" class="text-[33px]">工艺对象</a><svg class="h-[18px] w-2.5" viewBox="0 0 10 18"><path d="M0 0l10 9-10 9z" fill="#fff"/></svg>
        <a href="#">轴_1 [DB1]</a>
      </nav>
      <div class="ml-auto flex items-center gap-4">
        <button aria-label="最小化"><svg class="size-[26px]" viewBox="0 0 26 26"><path d="M0 17h26v8H0z" fill="#fff"/></svg></button>
        <button aria-label="还原"><svg class="size-[26px]" viewBox="0 0 26 26"><path d="M0 7h18v19H0zM7 0h19v18h-5V5H7z" fill="#fff"/></svg></button>
        <button aria-label="最大化" class="w-[6px] overflow-hidden"><svg class="size-[26px]" viewBox="0 0 26 26"><path d="M0 0h26v26H0zM0 4v3h26V4z" fill="#fff" fill-rule="evenodd"/></svg></button>
      </div>
    </div>
    <div class="h-14 shrink-0 border-b-2 border-[#808080]"></div>

    <div class="flex h-[61px] shrink-0 items-center bg-[#e9e9e9] pl-[9px] whitespace-nowrap">
      <div class="flex h-[52px] items-center border-r-2 border-dotted border-[#999] pr-2"><button aria-label="全部监视" class="flex h-12 w-[47px] items-center justify-center bg-[#c2cdd8]"><svg class="size-9"><use href="#glasses"/></svg></button></div>
      <span class="ml-[175px]">主控制<span lang="zh-TW" class="font-['Noto_Sans_CJK_TC']">：</span></span>
      <button class="ml-6 flex items-center gap-4 text-[#999]"><svg class="size-9"><use href="#handOff"/></svg>激活</button>
      <button class="ml-[21px] flex items-center gap-[15px]"><svg class="size-9"><use href="#motorPc"/></svg>禁用</button>
      <svg class="ml-[26px] h-[54px] w-14"><use href="#chevrons"/></svg>
      <span class="ml-9">轴<span lang="zh-TW" class="font-['Noto_Sans_CJK_TC']">：</span></span>
      <button class="ml-6 flex items-center gap-[15px] text-[#999]"><svg class="size-9"><use href="#okOff"/></svg>启用</button>
      <button class="ml-[39px] flex items-center gap-[15px]"><svg class="size-9"><use href="#errOn"/></svg>禁用</button>
      <svg class="mr-[410px] ml-auto h-[54px] w-14"><use href="#chevrons"/></svg>
    </div>

    <div class="flex min-h-0 flex-1">
      <!-- Navigation list -->
      <div class="w-[446px] shrink-0 overflow-hidden bg-[#efefef]">
        <div class="flex h-[45px] border-b-2 border-white pt-0.5"><div class="w-[402px] border-r-2 border-[#d4d4d4] pl-[37px]"><a href="#" class="block w-[143px] bg-[#c2cdd8] py-0.5 pl-1 whitespace-nowrap">轴控制面板</a></div></div>
        <div id="nav-rows"></div>
      </div>
      <!-- Splitter -->
      <div class="flex w-[17px] shrink-0 flex-col border-x-2 border-[#8c8c8c] bg-[#dadada] pt-[652px]">
        <button aria-label="折叠左侧" class="flex h-[55px] items-center justify-center border-y-2 border-[#8c8c8c] bg-linear-to-b from-[#aaa] to-[#e4e4e4]"><svg class="h-4 w-2" viewBox="0 0 8 16"><path d="M8 0v16L0 8z"/></svg></button>
        <button aria-label="展开左侧" class="mt-[21px] flex h-[55px] items-center justify-center border-y-2 border-[#8c8c8c] bg-linear-to-b from-[#aaa] to-[#e4e4e4]"><svg class="h-4 w-2" viewBox="0 0 8 16"><path d="M0 0v16l8-8z"/></svg></button>
      </div>

      <!-- Axis control panel -->
      <div class="flex min-w-0 flex-1 flex-col overflow-hidden bg-[#e9e9e9]">
        <div class="flex h-[81px] shrink-0 items-center pb-1 pl-[33px] pt-5">
          <h2 class="text-[35px] font-bold whitespace-nowrap">轴控制面板</h2>
          <div class="mt-5 ml-5 h-[3px] flex-1 bg-[#262626]"></div>
        </div>

        <div class="flex shrink-0 gap-5 bg-[#c3c3c3] pb-[18px]">
          <section class="w-[1013px] shrink-0 bg-[#cccccc] pt-4 pb-[47px]">
            <div class="grid grid-cols-[362px_445px] gap-x-6 pl-[33px]">
              <h3 class="text-[33px] font-bold">命令</h3>
              <div class="relative mt-[11px] mb-[122px] h-10">
                <select aria-label="命令" class="h-10 w-full appearance-none rounded-sm border-2 border-[#919191] bg-[#ffc663] pl-2 leading-[34px]"><option>点动</option></select>
                <span class="pointer-events-none absolute inset-y-0 right-0 flex w-[37px] items-center justify-center border-2 border-[#919191] bg-linear-to-b from-white via-[#cfcfcf] to-[#eee]"><svg class="h-2.5 w-4" viewBox="0 0 16 10"><path d="M0 0h16L8 10z"/></svg></span>
              </div>
            </div>
            <div class="grid auto-rows-[40px] grid-cols-[362px_445px] items-center gap-x-6 gap-y-3.5 pl-[33px]">
              <label for="vel" class="text-right">速度<span lang="zh-TW" class="font-['Noto_Sans_CJK_TC']">：</span></label>
              <div class="flex h-10 border-2 border-[#919191] bg-[#ffc663]"><input id="vel" type="text" value="1000.0" class="min-w-0 flex-1 pl-2"><span class="bg-[#e4e4e4] px-1.5">脉冲/s</span></div>
              <label for="acc" class="pt-2 text-right">加速度/减速度<span lang="zh-TW" class="font-['Noto_Sans_CJK_TC']">：</span></label>
              <div class="flex h-10 border-2 border-[#919191] bg-[#ffc663]"><input id="acc" type="text" value="5000.0" class="min-w-0 flex-1 pl-2"><span class="bg-[#e4e4e4] px-1.5">脉冲/s²</span></div>
              <div class="col-start-2 flex items-center gap-2 pl-1">
                <input id="jerkOn" type="checkbox" class="size-[34px] appearance-none rounded-md border-2 border-[#808080] bg-linear-to-b from-white via-[#cfcfcf] to-[#f4f4f4]">
                <label for="jerkOn">激活加加速度限值</label>
              </div>
              <label for="jerk" class="pr-2 text-right text-[#999]">加加速度<span lang="zh-TW" class="font-['Noto_Sans_CJK_TC']">：</span></label>
              <div class="flex h-10 border-2 border-[#919191]"><input id="jerk" type="text" value="192.0" disabled class="min-w-0 flex-1 pl-2 text-[#999]"><span class="bg-[#e4e4e4] px-1.5">脉冲/s³</span></div>
            </div>
            <div class="mt-[59px] grid grid-cols-[458px_458px] gap-x-[15px] gap-y-[23px] pl-[41px]">
              <button class="flex h-[45px] items-center gap-2 rounded border-2 border-[#919191] bg-linear-to-b from-white via-[#cbcbcb] to-[#e2e2e2] pl-1"><svg class="size-[34px]"><use href="#rew"/></svg>反向</button>
              <button class="flex h-[45px] items-center gap-2 rounded border-2 border-[#919191] bg-linear-to-b from-white via-[#cbcbcb] to-[#e2e2e2] pl-1"><svg class="size-[34px]"><use href="#fwd"/></svg>正向</button>
              <button class="flex h-[45px] items-center gap-2 rounded border-2 border-[#919191] bg-linear-to-b from-white via-[#cbcbcb] to-[#e2e2e2] pl-1"><span class="size-[34px] border-[3px] border-[#14144f] bg-white p-0.5"><span class="block size-full bg-linear-to-br from-[#ff1010] to-[#a80000]"></span></span>停止</button>
            </div>
          </section>
          <section class="min-w-0 flex-1 overflow-hidden bg-[#cccccc] pt-4 pl-[33px]">
            <h3 class="text-[33px] font-bold">当前值</h3>
            <div class="mt-[137px] grid auto-rows-[40px] grid-cols-[182px_445px] items-center gap-x-[17px] gap-y-3.5">
              <label for="pos" class="text-right">位置<span lang="zh-TW" class="font-['Noto_Sans_CJK_TC']">：</span></label>
              <div class="flex h-10 border-2 border-[#919191] bg-[#e8dac4]"><input id="pos" type="text" readonly value="0.0" class="min-w-0 flex-1 pl-2"><span class="w-[209px] bg-[#e4e4e4] px-1.5">脉冲</span></div>
              <label for="actVel" class="text-right">速度<span lang="zh-TW" class="font-['Noto_Sans_CJK_TC']">：</span></label>
              <div class="flex h-10 border-2 border-[#919191] bg-[#e8dac4]"><input id="actVel" type="text" readonly value="0.0" class="min-w-0 flex-1 pl-2"><span class="w-[229px] bg-[#e4e4e4] px-1.5">脉冲/s</span></div>
            </div>
          </section>
        </div>

        <section class="shrink-0 bg-[#cccccc] pt-4 pb-12">
          <h3 class="pl-[33px] text-[33px] font-bold">轴状态</h3>
          <div class="mt-[17px] flex pl-[151px]">
            <ul class="grid w-[781px] shrink-0 grid-cols-[324px_1fr] content-start gap-y-5">
              <li class="flex h-[34px] items-center gap-6"><span class="size-[34px] border-[3px] border-[#14144f] bg-white p-0.5"><span class="block size-full bg-linear-to-br from-[#bdbdbd] to-[#858585]"></span></span>已启用</li>
              <li class="col-start-1 flex h-[34px] items-center gap-6"><span class="size-[34px] border-[3px] border-[#14144f] bg-white p-0.5"><span class="block size-full bg-linear-to-br from-[#bdbdbd] to-[#858585]"></span></span>已归位</li>
              <li class="col-start-1 flex h-[34px] items-center gap-6"><span class="size-[34px] border-[3px] border-[#14144f] bg-white p-0.5"><span class="block size-full bg-linear-to-br from-[#bdbdbd] to-[#858585]"></span></span>就绪</li>
              <li class="flex h-[34px] items-center gap-6"><span class="size-[34px] border-[3px] border-[#14144f] bg-white p-0.5"><span class="block size-full bg-linear-to-br from-[#bdbdbd] to-[#858585]"></span></span>驱动装置错误</li>
              <li class="flex h-[34px] items-center gap-6"><span class="size-[34px] border-[3px] border-[#14144f] bg-white p-0.5"><span class="block size-full bg-linear-to-br from-[#bdbdbd] to-[#858585]"></span></span>轴错误</li>
              <li class="flex h-[34px] items-center gap-6"><span class="size-[34px] border-[3px] border-[#14144f] bg-white p-0.5"><span class="block size-full bg-linear-to-br from-[#bdbdbd] to-[#858585]"></span></span>需要重新启动</li>
            </ul>
            <div class="flex min-w-0 flex-1 flex-col">
              <label for="infoMsg" class="pl-1.5 leading-[28px]">信息性消息</label>
              <textarea id="infoMsg" readonly class="mt-[25px] h-[121px] resize-none border-2 border-r-0 border-[#919191] bg-[#e8dac4] pl-1.5">轴处于停止状态</textarea>
              <button class="mt-[13px] flex h-[45px] w-[257px] items-center gap-2 rounded border-2 border-[#919191] bg-linear-to-b from-white via-[#cbcbcb] to-[#e2e2e2] pl-0.5"><svg class="size-9"><use href="#ack"/></svg>确认</button>
            </div>
          </div>
          <div class="mt-14 flex flex-col pl-[41px]">
            <label for="errMsg" class="pl-1.5 leading-[28px]">错误消息</label>
            <textarea id="errMsg" readonly class="mt-6 h-[72px] resize-none border-2 border-r-0 border-[#919191] bg-[#e8dac4] pl-1.5">正常</textarea>
          </div>
        </section>

        <div class="flex-1"></div>
        <div class="flex h-9 shrink-0 items-start overflow-hidden bg-[#c3c3c3] pl-px">
          <button aria-label="向左滚动" class="flex h-10 w-[39px] shrink-0 items-center justify-center border-2 border-[#999] bg-[#e4e4e4] inset-ring-2 inset-ring-white"><svg class="size-6 rotate-90 text-[#555]"><use href="#chev"/></svg></button>
          <div class="mr-[71px] ml-[3px] flex h-10 flex-1 items-center justify-center gap-[3px] border-2 border-[#999] bg-linear-to-b from-[#eee] to-[#d6d6d6] inset-ring-2 inset-ring-white"><i class="h-[18px] w-0.5 bg-[#777]"></i><i class="h-[18px] w-0.5 bg-[#777]"></i><i class="h-[18px] w-0.5 bg-[#777]"></i><i class="h-[18px] w-0.5 bg-[#777]"></i></div>
        </div>
      </div>
    </div>
  </main>
</div>

<p class="pointer-events-none absolute right-6 bottom-3.5 font-['Noto_Sans_CJK_SC',sans-serif] text-[50px] leading-[64px] font-light text-[#e8e8e8] text-shadow-[1px_2px_1px_#888]">CSDN @I can do it!</p>

<script>
  // depth, expander state, icon, label, check mark, status dot
  const items = [
    [0, 'open', 'doc', 'tro_test_comm', 1, 1],
    [1, '', 'add', '添加新设备', 0, 0],
    [1, '', 'net', '设备和网络', 0, 0],
    [1, 'open', 'plc', 'PLC_1 [CPU 1214C ...', 1, 1],
    [2, '', 'devcfg', '设备组态', 0, 0],
    [2, '', 'diag', '在线和诊断', 0, 0],
    [2, 'closed', 'fBlock', '程序块', 0, 1],
    [2, 'open', 'fGear', '工艺对象', 0, 1],
    [3, '', 'add', '新增对象', 0, 0],
    [3, 'open', 'axis', '轴_1 [DB1]', 0, 1],
    [4, '', 'box', '组态', 0, 0],
    [4, '', 'tools', '调试', 0, 0],
    [4, '', 'diag', '诊断', 0, 0],
    [2, 'closed', 'fSource', '外部源文件', 0, 0],
    [2, 'closed', 'fTag', 'PLC 变量', 0, 1],
    [2, 'closed', 'fType', 'PLC 数据类型', 0, 1],
    [2, 'closed', 'fWatch', '监控与强制表', 0, 0],
    [2, 'closed', 'fBackup', '在线备份', 0, 0],
    [2, 'closed', 'fTrace', 'Traces', 0, 0],
    [2, 'closed', 'fOpc', 'OPC UA 通信', 0, 0],
    [2, 'closed', 'fProxy', '设备代理数据', 0, 0],
    [2, '', 'info', '程序信息', 0, 0],
    [2, '', 'textlist', 'PLC 报警文本列表', 0, 0],
  ];
  const indent = ['pl-0.5', 'pl-[42px]', 'pl-[83px]', 'pl-[123px]', 'pl-[163px]'];
  const arrows = {
    open: '<svg class="h-[11px] w-[18px]" viewBox="0 0 18 11"><path d="M0 0h18L9 11z"/></svg>',
    closed: '<svg class="h-[18px] w-2.5" viewBox="0 0 10 18"><path d="M0 0l10 9-10 9z"/></svg>',
    '': '',
  };
  document.getElementById('tree').innerHTML = items.map(([depth, state, icon, label, check, dot]) => {
    const selected = label === '调试';
    const tone = selected ? 'bg-[#d0d6db]' : check ? 'bg-[#e0e0e0]' : '';
    const frame = selected ? 'border-2 border-dotted border-[#999]' : 'border-x-2 border-l-transparent border-r-[#c8c8c8]';
    return `<li role="treeitem" aria-selected="${selected}" class="flex h-[43px] first:h-[41px] nth-[5n]:h-[42px] border-b-2 border-white ${tone}">
      <div class="flex w-[404px] items-center whitespace-nowrap ${frame}"><div class="flex items-center ${indent[depth]}">
        <span class="mr-[3px] flex w-9 justify-center">${arrows[state]}</span>
        <svg class="mr-2 size-9"><use href="#${icon}"/></svg>${label}
      </div></div>
      <div class="flex w-[45px] items-center justify-center border-r-2 border-white">${check ? '<svg class="size-8"><use href="#ok"/></svg>' : ''}</div>
      <div class="flex flex-1 items-center justify-center pr-1">${dot ? '<svg class="size-[30px]" viewBox="0 0 30 30"><circle cx="15" cy="15" r="14.500" fill="url(#gBall)"/></svg>' : ''}</div>
    </li>`;
  }).join('');
  document.getElementById('nav-rows').innerHTML = Array.from({ length: 33 }, () =>
    '<div class="h-[43px] nth-[5n]:h-[42px] border-b-2 border-white"><div class="h-full w-[402px] border-r-2 border-[#d4d4d4]"></div></div>').join('');
</script>
</body>
</html>
